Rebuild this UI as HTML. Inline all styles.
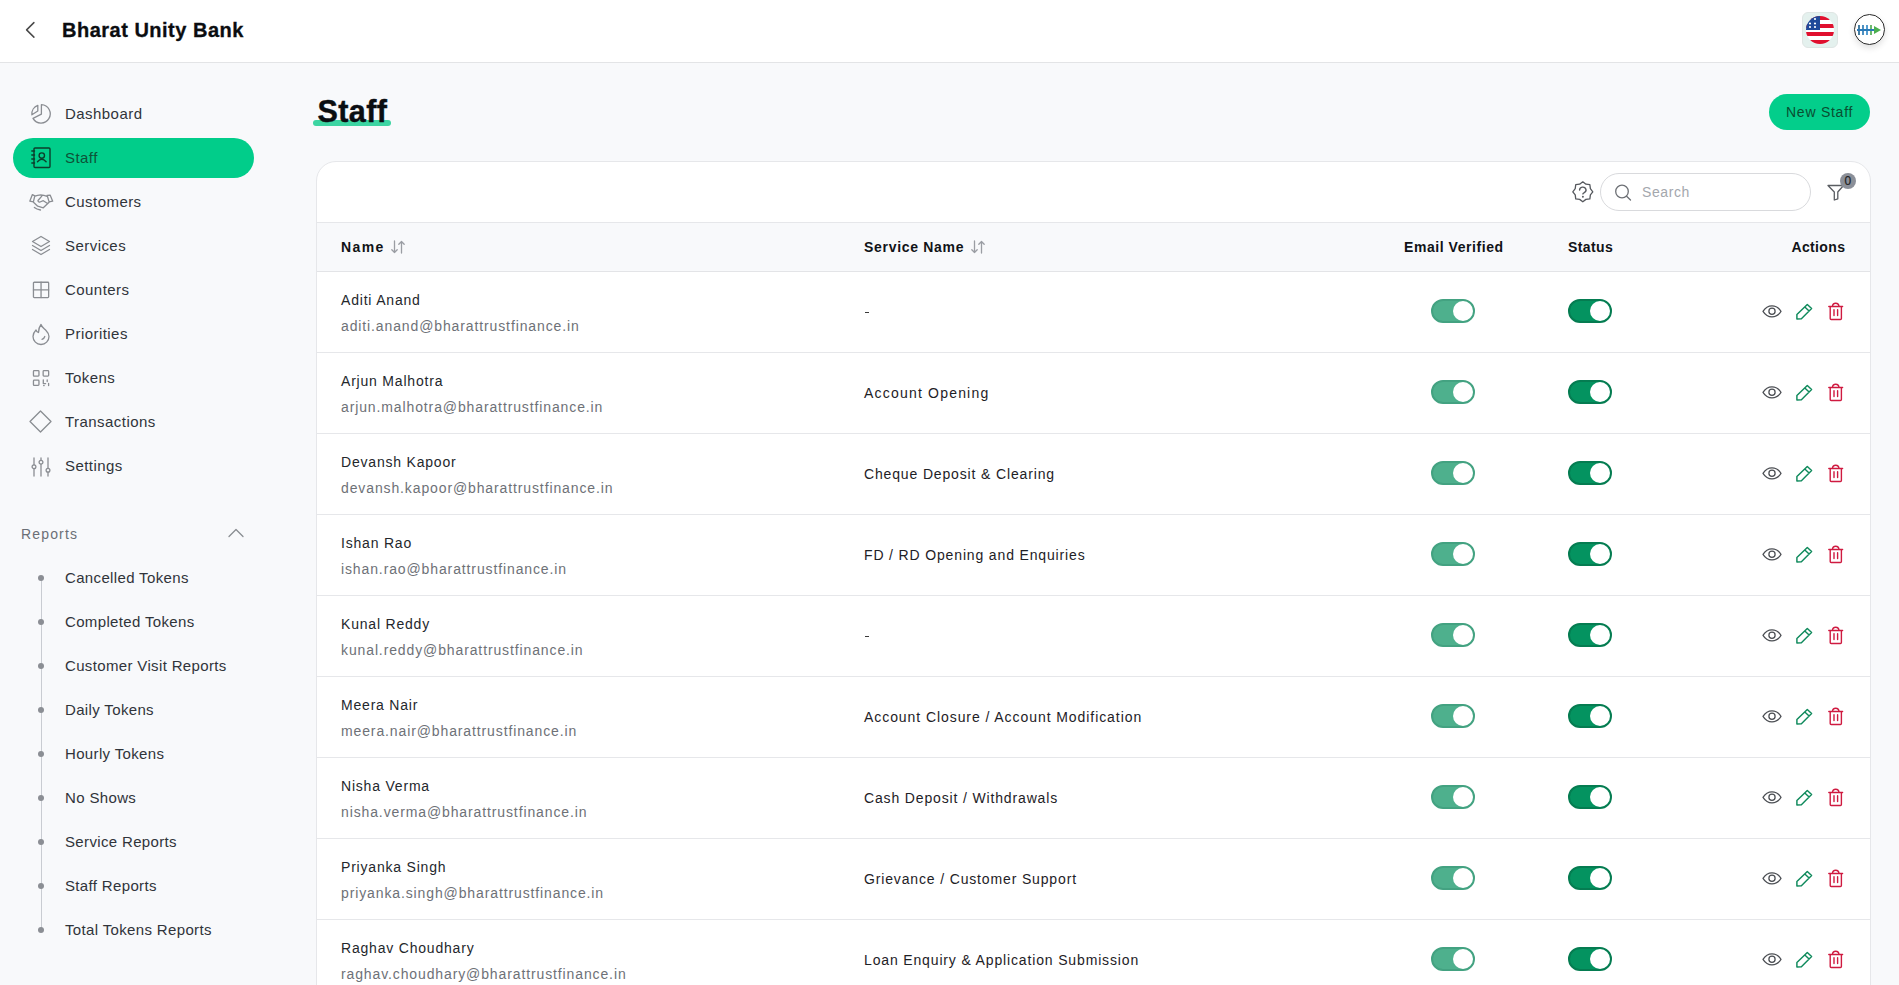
<!DOCTYPE html>
<html><head><meta charset="utf-8"><title>Staff</title>
<style>
html,body{margin:0;padding:0;width:1899px;height:985px;overflow:hidden;background:#f8f9fb;font-family:"Liberation Sans",sans-serif;}
.t{position:absolute;white-space:nowrap;}
svg{display:block}
</style></head><body>
<div style="position:absolute;left:0;top:0;width:1899px;height:62px;background:#fff;border-bottom:1px solid #e3e4e6"></div>
<svg style="position:absolute;left:22px;top:18px" width="16" height="24" viewBox="0 0 16 24"><path d="M11.9 4.6 L4.6 11.85 L11.9 19.1" fill="none" stroke="#4a4a4a" stroke-width="1.5" stroke-linecap="round" stroke-linejoin="round"/></svg>
<div class="t" style="left:62px;top:18.07px;font-size:20px;line-height:24px;font-weight:700;color:#0b0d10;letter-spacing:0.5px;-webkit-text-stroke:0.3px #0b0d10;">Bharat Unity Bank</div>
<div style="position:absolute;left:1802px;top:12px;width:34px;height:34px;border-radius:6px;background:#e4f1ee;border:1px solid #dfe6e4"></div>
<svg style="position:absolute;left:1806px;top:16px" width="28" height="28" viewBox="0 0 28 28"><defs><clipPath id="fc"><circle cx="14" cy="14" r="14"/></clipPath></defs><g clip-path="url(#fc)"><rect x="0" y="0" width="28" height="4" fill="#e0102e"/><rect x="0" y="4" width="28" height="4" fill="#ffffff"/><rect x="0" y="8" width="28" height="4" fill="#e0102e"/><rect x="0" y="12" width="28" height="4" fill="#ffffff"/><rect x="0" y="16" width="28" height="4" fill="#e0102e"/><rect x="0" y="20" width="28" height="4" fill="#ffffff"/><rect x="0" y="24" width="28" height="4" fill="#e0102e"/><rect x="0" y="0" width="14" height="14" fill="#1f4a9a"/><circle cx="4" cy="3" r="1.1" fill="#fff"/><circle cx="9" cy="3" r="1.1" fill="#fff"/><circle cx="4" cy="7.5" r="1.1" fill="#fff"/><circle cx="9" cy="7.5" r="1.1" fill="#fff"/><circle cx="4" cy="11" r="1.1" fill="#fff"/><circle cx="9" cy="11" r="1.1" fill="#fff"/></g></svg>
<div style="position:absolute;left:1854px;top:14px;width:29px;height:29px;border-radius:50%;background:#fff;border:1.5px solid #2a2a2a;box-shadow:0 3px 6px rgba(0,0,0,0.12)"></div>
<svg style="position:absolute;left:1856px;top:24px" width="28" height="12" viewBox="0 0 28 12"><rect x="2.2" y="1" width="1.6" height="10" fill="#1b5f8a"/><rect x="6.2" y="1" width="1.6" height="10" fill="#2476b0"/><rect x="10.2" y="1" width="1.6" height="10" fill="#2a86c6"/><rect x="14.2" y="1" width="1.6" height="10" fill="#4aa84a"/><rect x="1" y="5" width="18" height="2" fill="#2a7ab8"/><path d="M18 2 L25 6 L18 10 Z" fill="#4caf50"/></svg>
<div style="position:absolute;left:13px;top:138px;width:241px;height:40px;border-radius:20px;background:#01cd8a"></div>
<svg style="position:absolute;left:31px;top:104px;overflow:visible" width="20" height="20" viewBox="0 0 20 20"><path d="M10.4 0.7 A9.2 9.2 0 1 1 2 14.4 L10.4 10.2 Z" fill="none" stroke="#8a8d92" stroke-width="1.3" stroke-linecap="round" stroke-linejoin="round"/><path d="M6.8 1.3 L6.8 7 L0.9 10.8 A9.2 9.2 0 0 1 6.8 1.3 Z" fill="none" stroke="#8a8d92" stroke-width="1.3" stroke-linecap="round" stroke-linejoin="round"/></svg>
<div class="t" style="left:65px;top:104.80px;font-size:15px;line-height:18px;font-weight:400;color:#30343a;letter-spacing:0.45px;">Dashboard</div>
<svg style="position:absolute;left:28px;top:146px;overflow:visible" width="24" height="24" viewBox="0 0 24 24"><g fill="none" stroke="#0d3d2b" stroke-width="1.4" stroke-linecap="round" stroke-linejoin="round"><rect x="6" y="2" width="16" height="19.5" rx="1"/><circle cx="13.8" cy="9.6" r="2.7"/><path d="M9.5 15.8 Q13.8 10.8 18.1 15.8"/><path d="M3.8 5 H6.5 M3.8 9 H6.5 M3.8 13 H6.5 M3.8 17 H6.5"/></g></svg>
<div class="t" style="left:65px;top:148.80px;font-size:15px;line-height:18px;font-weight:400;color:#0e5238;letter-spacing:0.45px;">Staff</div>
<svg style="position:absolute;left:25px;top:190px;overflow:visible" width="32" height="25" viewBox="0 0 32 25"><path d="M7.4 4.6 L9.8 5.9 L8.4 11.9 L4.8 11.2 Z M22.1 5.3 L25.1 5.1 L27.7 11.2 L24.1 11.9 Z M9.9 6.1 Q12.5 5 15.7 4.8 Q19 5 22.1 6.3 M16.8 6.1 L13 10.5 Q13 12.4 15 12 L18.3 10.7 L22.6 13.5 M8.2 12 L12.7 16.2 L18.3 17.8 L24.1 12.2 M9.4 17.5 Q11.5 19.3 15.5 20" fill="none" stroke="#8a8d92" stroke-width="1.3" stroke-linecap="round" stroke-linejoin="round"/></svg>
<div class="t" style="left:65px;top:192.80px;font-size:15px;line-height:18px;font-weight:400;color:#30343a;letter-spacing:0.45px;">Customers</div>
<svg style="position:absolute;left:31px;top:235px;overflow:visible" width="20" height="21" viewBox="0 0 20 21"><path d="M10 1.5 L18.5 6.5 L10 11.5 L1.5 6.5 Z" fill="none" stroke="#8a8d92" stroke-width="1.3" stroke-linecap="round" stroke-linejoin="round"/><path d="M1.5 10.5 L10 15.5 L18.5 10.5" fill="none" stroke="#8a8d92" stroke-width="1.3" stroke-linecap="round" stroke-linejoin="round"/><path d="M1.5 14.5 L10 19.5 L18.5 14.5" fill="none" stroke="#8a8d92" stroke-width="1.3" stroke-linecap="round" stroke-linejoin="round"/></svg>
<div class="t" style="left:65px;top:236.80px;font-size:15px;line-height:18px;font-weight:400;color:#30343a;letter-spacing:0.45px;">Services</div>
<svg style="position:absolute;left:31px;top:280px;overflow:visible" width="20" height="20" viewBox="0 0 20 20"><rect x="2.45" y="2.25" width="15.2" height="15.3" rx="0.8" fill="none" stroke="#8a8d92" stroke-width="1.3" stroke-linecap="round" stroke-linejoin="round"/><path d="M10.05 2.25 V17.55 M2.45 9.9 H17.65" fill="none" stroke="#8a8d92" stroke-width="1.3" stroke-linecap="round" stroke-linejoin="round"/></svg>
<div class="t" style="left:65px;top:280.80px;font-size:15px;line-height:18px;font-weight:400;color:#30343a;letter-spacing:0.45px;">Counters</div>
<svg style="position:absolute;left:31px;top:323px;overflow:visible" width="20" height="22" viewBox="0 0 20 22"><path d="M10 1.5 C10.5 4 13 5.5 15 7.5 C17 9.5 18 11.5 18 13.5 A8 8 0 0 1 2 13.5 C2 10.5 3.5 8.5 5 7 C5.5 8.5 6.5 9.5 7.5 9.5 C7.5 6.5 8.5 3.5 10 1.5 Z" fill="none" stroke="#8a8d92" stroke-width="1.3" stroke-linecap="round" stroke-linejoin="round"/><path d="M13.8 13.5 Q13.2 15.6 11 16.3" fill="none" stroke="#8a8d92" stroke-width="1.3" stroke-linecap="round" stroke-linejoin="round"/></svg>
<div class="t" style="left:65px;top:324.80px;font-size:15px;line-height:18px;font-weight:400;color:#30343a;letter-spacing:0.45px;">Priorities</div>
<svg style="position:absolute;left:31px;top:368px;overflow:visible" width="20" height="20" viewBox="0 0 20 20"><rect x="2.45" y="2.65" width="5.5" height="5.5" rx="0.8" fill="none" stroke="#8a8d92" stroke-width="1.3" stroke-linecap="round" stroke-linejoin="round"/><rect x="12.15" y="2.65" width="5.5" height="5.5" rx="0.8" fill="none" stroke="#8a8d92" stroke-width="1.3" stroke-linecap="round" stroke-linejoin="round"/><rect x="2.45" y="12.1" width="5.5" height="5.3" rx="0.8" fill="none" stroke="#8a8d92" stroke-width="1.3" stroke-linecap="round" stroke-linejoin="round"/><path d="M12.3 11.8 V15.6 H14.6 M16.2 11.8 V13.6 M17.6 15.4 V17.6 M12.6 17.6 H13.2" fill="none" stroke="#8a8d92" stroke-width="1.3" stroke-linecap="round" stroke-linejoin="round"/></svg>
<div class="t" style="left:65px;top:368.80px;font-size:15px;line-height:18px;font-weight:400;color:#30343a;letter-spacing:0.45px;">Tokens</div>
<svg style="position:absolute;left:30px;top:411px;overflow:visible" width="21" height="21" viewBox="0 0 21 21"><path d="M10.5 0 L21 10.5 L10.5 21 L0 10.5 Z" transform="translate(0 0)" fill="none" stroke="#8a8d92" stroke-width="1.3" stroke-linecap="round" stroke-linejoin="round"/></svg>
<div class="t" style="left:65px;top:412.80px;font-size:15px;line-height:18px;font-weight:400;color:#30343a;letter-spacing:0.45px;">Transactions</div>
<svg style="position:absolute;left:31px;top:457px;overflow:visible" width="20" height="20" viewBox="0 0 20 20"><path d="M3 1 V8 M3 11.5 V19 M10 1 V3.5 M10 7 V19 M17 1 V11.5 M17 15 V19" fill="none" stroke="#8a8d92" stroke-width="1.3" stroke-linecap="round" stroke-linejoin="round"/><circle cx="3" cy="9.8" r="1.9" fill="none" stroke="#8a8d92" stroke-width="1.3" stroke-linecap="round" stroke-linejoin="round"/><circle cx="10" cy="5.3" r="1.9" fill="none" stroke="#8a8d92" stroke-width="1.3" stroke-linecap="round" stroke-linejoin="round"/><circle cx="17" cy="13.3" r="1.9" fill="none" stroke="#8a8d92" stroke-width="1.3" stroke-linecap="round" stroke-linejoin="round"/></svg>
<div class="t" style="left:65px;top:456.80px;font-size:15px;line-height:18px;font-weight:400;color:#30343a;letter-spacing:0.45px;">Settings</div>
<div class="t" style="left:21px;top:525.65px;font-size:14px;line-height:17px;font-weight:400;color:#6b6f76;letter-spacing:1.15px;">Reports</div>
<svg style="position:absolute;left:226px;top:526px" width="20" height="14" viewBox="0 0 20 14"><path d="M3 10.5 L10 3.5 L17 10.5" fill="none" stroke="#8a8d92" stroke-width="1.3" stroke-linecap="round" stroke-linejoin="round"/></svg>
<div style="position:absolute;left:40.5px;top:578px;width:1px;height:352px;background:#c9ccd2"></div>
<div style="position:absolute;left:38px;top:575.0px;width:6px;height:6px;border-radius:50%;background:#8b8e94"></div>
<div class="t" style="left:65px;top:568.80px;font-size:15px;line-height:18px;font-weight:400;color:#30343a;letter-spacing:0.35px;">Cancelled Tokens</div>
<div style="position:absolute;left:38px;top:619.0px;width:6px;height:6px;border-radius:50%;background:#8b8e94"></div>
<div class="t" style="left:65px;top:612.80px;font-size:15px;line-height:18px;font-weight:400;color:#30343a;letter-spacing:0.35px;">Completed Tokens</div>
<div style="position:absolute;left:38px;top:663.0px;width:6px;height:6px;border-radius:50%;background:#8b8e94"></div>
<div class="t" style="left:65px;top:656.80px;font-size:15px;line-height:18px;font-weight:400;color:#30343a;letter-spacing:0.35px;">Customer Visit Reports</div>
<div style="position:absolute;left:38px;top:707.0px;width:6px;height:6px;border-radius:50%;background:#8b8e94"></div>
<div class="t" style="left:65px;top:700.80px;font-size:15px;line-height:18px;font-weight:400;color:#30343a;letter-spacing:0.35px;">Daily Tokens</div>
<div style="position:absolute;left:38px;top:751.0px;width:6px;height:6px;border-radius:50%;background:#8b8e94"></div>
<div class="t" style="left:65px;top:744.80px;font-size:15px;line-height:18px;font-weight:400;color:#30343a;letter-spacing:0.35px;">Hourly Tokens</div>
<div style="position:absolute;left:38px;top:795.0px;width:6px;height:6px;border-radius:50%;background:#8b8e94"></div>
<div class="t" style="left:65px;top:788.80px;font-size:15px;line-height:18px;font-weight:400;color:#30343a;letter-spacing:0.35px;">No Shows</div>
<div style="position:absolute;left:38px;top:839.0px;width:6px;height:6px;border-radius:50%;background:#8b8e94"></div>
<div class="t" style="left:65px;top:832.80px;font-size:15px;line-height:18px;font-weight:400;color:#30343a;letter-spacing:0.35px;">Service Reports</div>
<div style="position:absolute;left:38px;top:883.0px;width:6px;height:6px;border-radius:50%;background:#8b8e94"></div>
<div class="t" style="left:65px;top:876.80px;font-size:15px;line-height:18px;font-weight:400;color:#30343a;letter-spacing:0.35px;">Staff Reports</div>
<div style="position:absolute;left:38px;top:927.0px;width:6px;height:6px;border-radius:50%;background:#8b8e94"></div>
<div class="t" style="left:65px;top:920.80px;font-size:15px;line-height:18px;font-weight:400;color:#30343a;letter-spacing:0.35px;">Total Tokens Reports</div>
<div style="position:absolute;left:313px;top:120px;width:78px;height:6px;border-radius:3px;background:#3dd5a2"></div>
<div class="t" style="left:317.5px;top:93.13px;font-size:30.5px;line-height:37px;font-weight:700;color:#0b0e12;letter-spacing:0.4px;-webkit-text-stroke:0.45px #0b0e12;">Staff</div>
<div style="position:absolute;left:1769px;top:94px;width:101px;height:36px;border-radius:18px;background:#03ce8b"></div>
<div class="t" style="left:1786px;top:103.65px;font-size:14px;line-height:17px;font-weight:400;color:#0a4d31;letter-spacing:0.75px;">New Staff</div>
<div style="position:absolute;left:316px;top:161px;width:1553px;height:900px;background:#fff;border:1px solid #e6e7ea;border-radius:20px 20px 0 0"></div>
<div style="position:absolute;left:317px;top:222px;width:1553px;height:50px;background:#f8f9fb;border-top:1px solid #e6e7ea;border-bottom:1px solid #e3e4e7;box-sizing:border-box"></div>
<svg style="position:absolute;left:1568px;top:177px" width="30" height="30" viewBox="0 0 30 30"><path d="M14.80 4.80 L17.94 7.22 L21.87 7.73 L22.38 11.66 L24.80 14.80 L22.38 17.94 L21.87 21.87 L17.94 22.38 L14.80 24.80 L11.66 22.38 L7.73 21.87 L7.22 17.94 L4.80 14.80 L7.22 11.66 L7.73 7.73 L11.66 7.22 Z" fill="none" stroke="#55585d" stroke-width="1.3" stroke-linejoin="round"/><path d="M11.6 13.1 A3.2 2.9 0 1 1 16.3 15.6 C15.4 16 14.9 16.4 14.9 16.9" fill="none" stroke="#55585d" stroke-width="1.4" stroke-linecap="round"/><circle cx="14.9" cy="19.8" r="0.95" fill="#55585d"/></svg>
<div style="position:absolute;left:1600px;top:173px;width:209px;height:36px;border-radius:19px;background:#fff;border:1px solid #d9dadd"></div>
<svg style="position:absolute;left:1613px;top:183px" width="20" height="19" viewBox="0 0 20 19"><circle cx="9" cy="8.5" r="6.3" fill="none" stroke="#6d7075" stroke-width="1.3"/><path d="M13.6 13.2 L17.5 17" stroke="#6d7075" stroke-width="1.3" stroke-linecap="round"/></svg>
<div class="t" style="left:1642px;top:183.85px;font-size:14px;line-height:17px;font-weight:400;color:#a4a7ad;letter-spacing:0.6px;">Search</div>
<svg style="position:absolute;left:1826px;top:183px" width="20" height="19" viewBox="0 0 20 19"><path d="M2 2.5 H17.5 L11.8 9 V15.8 L8.3 17 V9 Z" fill="none" stroke="#5a5d62" stroke-width="1.3" stroke-linejoin="round"/></svg>
<div style="position:absolute;left:1840px;top:173px;width:16px;height:16px;border-radius:50%;background:#8b8f98"></div>
<div class="t" style="left:1844.6px;top:174.34px;font-size:12px;line-height:14px;font-weight:400;color:#1d1f23;letter-spacing:0px;-webkit-text-stroke:0.2px #1d1f23;">0</div>
<div class="t" style="left:341px;top:238.75px;font-size:14px;line-height:17px;font-weight:700;color:#111317;letter-spacing:1.4px;">Name</div>
<div class="t" style="left:864px;top:238.75px;font-size:14px;line-height:17px;font-weight:700;color:#111317;letter-spacing:0.7px;">Service Name</div>
<div class="t" style="left:1404px;top:238.75px;font-size:14px;line-height:17px;font-weight:700;color:#111317;letter-spacing:0.56px;">Email Verified</div>
<div class="t" style="left:1568px;top:238.75px;font-size:14px;line-height:17px;font-weight:700;color:#111317;letter-spacing:0.4px;">Status</div>
<div class="t" style="left:1791.5px;top:238.75px;font-size:14px;line-height:17px;font-weight:700;color:#111317;letter-spacing:0.35px;">Actions</div>
<svg style="position:absolute;left:390px;top:239px" width="16" height="16" viewBox="0 0 16 16"><path d="M4.5 2 V13.5 M1.8 10.8 L4.5 13.5 L7.2 10.8" fill="none" stroke="#9a9da3" stroke-width="1.3" stroke-linecap="round" stroke-linejoin="round"/><path d="M11.5 14 V2.5 M8.8 5.2 L11.5 2.5 L14.2 5.2" fill="none" stroke="#9a9da3" stroke-width="1.3" stroke-linecap="round" stroke-linejoin="round"/></svg>
<svg style="position:absolute;left:970px;top:239px" width="16" height="16" viewBox="0 0 16 16"><path d="M4.5 2 V13.5 M1.8 10.8 L4.5 13.5 L7.2 10.8" fill="none" stroke="#9a9da3" stroke-width="1.3" stroke-linecap="round" stroke-linejoin="round"/><path d="M11.5 14 V2.5 M8.8 5.2 L11.5 2.5 L14.2 5.2" fill="none" stroke="#9a9da3" stroke-width="1.3" stroke-linecap="round" stroke-linejoin="round"/></svg>
<div class="t" style="left:341px;top:292.05px;font-size:14px;line-height:17px;font-weight:400;color:#24272c;letter-spacing:0.8px;">Aditi Anand</div>
<div class="t" style="left:341px;top:318.25px;font-size:14px;line-height:17px;font-weight:400;color:#6e7177;letter-spacing:0.88px;">aditi.anand@bharattrustfinance.in</div>
<div style="position:absolute;left:865px;top:311.6px;width:4px;height:1.7px;background:#3a3a3a"></div>
<div style="position:absolute;left:1431px;top:299px;width:44px;height:24px;border-radius:12px;background:#4eb08d;box-sizing:border-box;border:2px solid #43a281"></div>
<div style="position:absolute;left:1453px;top:301px;width:20px;height:20px;border-radius:50%;background:#fff"></div>
<div style="position:absolute;left:1568px;top:299px;width:44px;height:24px;border-radius:12px;background:#049360;box-sizing:border-box;border:2px solid #057c51"></div>
<div style="position:absolute;left:1590px;top:301px;width:20px;height:20px;border-radius:50%;background:#fff"></div>
<svg style="position:absolute;left:1761px;top:305px" width="22" height="14" viewBox="0 0 22 14"><path d="M2 6.3 C4.5 2.3 7.5 0.8 11 0.8 C14.5 0.8 17.5 2.3 20 6.3 C17.5 10.3 14.5 11.8 11 11.8 C7.5 11.8 4.5 10.3 2 6.3 Z" fill="none" stroke="#4b4e53" stroke-width="1.25" stroke-linejoin="round"/><circle cx="11" cy="6.3" r="3.1" fill="none" stroke="#4b4e53" stroke-width="1.25"/></svg>
<svg style="position:absolute;left:1795px;top:302px" width="18" height="20" viewBox="0 0 18 20"><path d="M1.9 12.6 L12.3 2.4 L16.6 6.6 L6.4 16.8 L1.9 17 Z M9.8 5 L14.1 9.1" fill="none" stroke="#0f8a5c" stroke-width="1.45" stroke-linejoin="round" stroke-linecap="round"/></svg>
<svg style="position:absolute;left:1827px;top:301.2px" width="18" height="20" viewBox="0 0 18 20"><path d="M1.8 5.5 H15.6 M5.4 5.5 Q5.6 2.2 8.7 2.2 Q11.8 2.2 12 5.5 M3.2 5.5 V17.5 Q3.2 18.5 4.2 18.5 H13.4 Q14.4 18.5 14.4 17.5 V5.5 M7 8.8 V14.6 M10.6 8.8 V14.6" fill="none" stroke="#cf1a40" stroke-width="1.4" stroke-linecap="round" stroke-linejoin="round"/></svg>
<div style="position:absolute;left:317px;top:352px;width:1553px;height:1px;background:#e6e7ea"></div>
<div class="t" style="left:341px;top:373.05px;font-size:14px;line-height:17px;font-weight:400;color:#24272c;letter-spacing:0.8px;">Arjun Malhotra</div>
<div class="t" style="left:341px;top:399.25px;font-size:14px;line-height:17px;font-weight:400;color:#6e7177;letter-spacing:0.88px;">arjun.malhotra@bharattrustfinance.in</div>
<div class="t" style="left:864px;top:385.35px;font-size:14px;line-height:17px;font-weight:400;color:#1e2126;letter-spacing:1.2px;">Account Opening</div>
<div style="position:absolute;left:1431px;top:380px;width:44px;height:24px;border-radius:12px;background:#4eb08d;box-sizing:border-box;border:2px solid #43a281"></div>
<div style="position:absolute;left:1453px;top:382px;width:20px;height:20px;border-radius:50%;background:#fff"></div>
<div style="position:absolute;left:1568px;top:380px;width:44px;height:24px;border-radius:12px;background:#049360;box-sizing:border-box;border:2px solid #057c51"></div>
<div style="position:absolute;left:1590px;top:382px;width:20px;height:20px;border-radius:50%;background:#fff"></div>
<svg style="position:absolute;left:1761px;top:386px" width="22" height="14" viewBox="0 0 22 14"><path d="M2 6.3 C4.5 2.3 7.5 0.8 11 0.8 C14.5 0.8 17.5 2.3 20 6.3 C17.5 10.3 14.5 11.8 11 11.8 C7.5 11.8 4.5 10.3 2 6.3 Z" fill="none" stroke="#4b4e53" stroke-width="1.25" stroke-linejoin="round"/><circle cx="11" cy="6.3" r="3.1" fill="none" stroke="#4b4e53" stroke-width="1.25"/></svg>
<svg style="position:absolute;left:1795px;top:383px" width="18" height="20" viewBox="0 0 18 20"><path d="M1.9 12.6 L12.3 2.4 L16.6 6.6 L6.4 16.8 L1.9 17 Z M9.8 5 L14.1 9.1" fill="none" stroke="#0f8a5c" stroke-width="1.45" stroke-linejoin="round" stroke-linecap="round"/></svg>
<svg style="position:absolute;left:1827px;top:382.2px" width="18" height="20" viewBox="0 0 18 20"><path d="M1.8 5.5 H15.6 M5.4 5.5 Q5.6 2.2 8.7 2.2 Q11.8 2.2 12 5.5 M3.2 5.5 V17.5 Q3.2 18.5 4.2 18.5 H13.4 Q14.4 18.5 14.4 17.5 V5.5 M7 8.8 V14.6 M10.6 8.8 V14.6" fill="none" stroke="#cf1a40" stroke-width="1.4" stroke-linecap="round" stroke-linejoin="round"/></svg>
<div style="position:absolute;left:317px;top:433px;width:1553px;height:1px;background:#e6e7ea"></div>
<div class="t" style="left:341px;top:454.05px;font-size:14px;line-height:17px;font-weight:400;color:#24272c;letter-spacing:0.8px;">Devansh Kapoor</div>
<div class="t" style="left:341px;top:480.25px;font-size:14px;line-height:17px;font-weight:400;color:#6e7177;letter-spacing:0.88px;">devansh.kapoor@bharattrustfinance.in</div>
<div class="t" style="left:864px;top:466.35px;font-size:14px;line-height:17px;font-weight:400;color:#1e2126;letter-spacing:0.85px;">Cheque Deposit &amp; Clearing</div>
<div style="position:absolute;left:1431px;top:461px;width:44px;height:24px;border-radius:12px;background:#4eb08d;box-sizing:border-box;border:2px solid #43a281"></div>
<div style="position:absolute;left:1453px;top:463px;width:20px;height:20px;border-radius:50%;background:#fff"></div>
<div style="position:absolute;left:1568px;top:461px;width:44px;height:24px;border-radius:12px;background:#049360;box-sizing:border-box;border:2px solid #057c51"></div>
<div style="position:absolute;left:1590px;top:463px;width:20px;height:20px;border-radius:50%;background:#fff"></div>
<svg style="position:absolute;left:1761px;top:467px" width="22" height="14" viewBox="0 0 22 14"><path d="M2 6.3 C4.5 2.3 7.5 0.8 11 0.8 C14.5 0.8 17.5 2.3 20 6.3 C17.5 10.3 14.5 11.8 11 11.8 C7.5 11.8 4.5 10.3 2 6.3 Z" fill="none" stroke="#4b4e53" stroke-width="1.25" stroke-linejoin="round"/><circle cx="11" cy="6.3" r="3.1" fill="none" stroke="#4b4e53" stroke-width="1.25"/></svg>
<svg style="position:absolute;left:1795px;top:464px" width="18" height="20" viewBox="0 0 18 20"><path d="M1.9 12.6 L12.3 2.4 L16.6 6.6 L6.4 16.8 L1.9 17 Z M9.8 5 L14.1 9.1" fill="none" stroke="#0f8a5c" stroke-width="1.45" stroke-linejoin="round" stroke-linecap="round"/></svg>
<svg style="position:absolute;left:1827px;top:463.2px" width="18" height="20" viewBox="0 0 18 20"><path d="M1.8 5.5 H15.6 M5.4 5.5 Q5.6 2.2 8.7 2.2 Q11.8 2.2 12 5.5 M3.2 5.5 V17.5 Q3.2 18.5 4.2 18.5 H13.4 Q14.4 18.5 14.4 17.5 V5.5 M7 8.8 V14.6 M10.6 8.8 V14.6" fill="none" stroke="#cf1a40" stroke-width="1.4" stroke-linecap="round" stroke-linejoin="round"/></svg>
<div style="position:absolute;left:317px;top:514px;width:1553px;height:1px;background:#e6e7ea"></div>
<div class="t" style="left:341px;top:535.05px;font-size:14px;line-height:17px;font-weight:400;color:#24272c;letter-spacing:0.8px;">Ishan Rao</div>
<div class="t" style="left:341px;top:561.25px;font-size:14px;line-height:17px;font-weight:400;color:#6e7177;letter-spacing:0.88px;">ishan.rao@bharattrustfinance.in</div>
<div class="t" style="left:864px;top:547.35px;font-size:14px;line-height:17px;font-weight:400;color:#1e2126;letter-spacing:0.85px;">FD / RD Opening and Enquiries</div>
<div style="position:absolute;left:1431px;top:542px;width:44px;height:24px;border-radius:12px;background:#4eb08d;box-sizing:border-box;border:2px solid #43a281"></div>
<div style="position:absolute;left:1453px;top:544px;width:20px;height:20px;border-radius:50%;background:#fff"></div>
<div style="position:absolute;left:1568px;top:542px;width:44px;height:24px;border-radius:12px;background:#049360;box-sizing:border-box;border:2px solid #057c51"></div>
<div style="position:absolute;left:1590px;top:544px;width:20px;height:20px;border-radius:50%;background:#fff"></div>
<svg style="position:absolute;left:1761px;top:548px" width="22" height="14" viewBox="0 0 22 14"><path d="M2 6.3 C4.5 2.3 7.5 0.8 11 0.8 C14.5 0.8 17.5 2.3 20 6.3 C17.5 10.3 14.5 11.8 11 11.8 C7.5 11.8 4.5 10.3 2 6.3 Z" fill="none" stroke="#4b4e53" stroke-width="1.25" stroke-linejoin="round"/><circle cx="11" cy="6.3" r="3.1" fill="none" stroke="#4b4e53" stroke-width="1.25"/></svg>
<svg style="position:absolute;left:1795px;top:545px" width="18" height="20" viewBox="0 0 18 20"><path d="M1.9 12.6 L12.3 2.4 L16.6 6.6 L6.4 16.8 L1.9 17 Z M9.8 5 L14.1 9.1" fill="none" stroke="#0f8a5c" stroke-width="1.45" stroke-linejoin="round" stroke-linecap="round"/></svg>
<svg style="position:absolute;left:1827px;top:544.2px" width="18" height="20" viewBox="0 0 18 20"><path d="M1.8 5.5 H15.6 M5.4 5.5 Q5.6 2.2 8.7 2.2 Q11.8 2.2 12 5.5 M3.2 5.5 V17.5 Q3.2 18.5 4.2 18.5 H13.4 Q14.4 18.5 14.4 17.5 V5.5 M7 8.8 V14.6 M10.6 8.8 V14.6" fill="none" stroke="#cf1a40" stroke-width="1.4" stroke-linecap="round" stroke-linejoin="round"/></svg>
<div style="position:absolute;left:317px;top:595px;width:1553px;height:1px;background:#e6e7ea"></div>
<div class="t" style="left:341px;top:616.05px;font-size:14px;line-height:17px;font-weight:400;color:#24272c;letter-spacing:0.8px;">Kunal Reddy</div>
<div class="t" style="left:341px;top:642.25px;font-size:14px;line-height:17px;font-weight:400;color:#6e7177;letter-spacing:0.88px;">kunal.reddy@bharattrustfinance.in</div>
<div style="position:absolute;left:865px;top:635.6px;width:4px;height:1.7px;background:#3a3a3a"></div>
<div style="position:absolute;left:1431px;top:623px;width:44px;height:24px;border-radius:12px;background:#4eb08d;box-sizing:border-box;border:2px solid #43a281"></div>
<div style="position:absolute;left:1453px;top:625px;width:20px;height:20px;border-radius:50%;background:#fff"></div>
<div style="position:absolute;left:1568px;top:623px;width:44px;height:24px;border-radius:12px;background:#049360;box-sizing:border-box;border:2px solid #057c51"></div>
<div style="position:absolute;left:1590px;top:625px;width:20px;height:20px;border-radius:50%;background:#fff"></div>
<svg style="position:absolute;left:1761px;top:629px" width="22" height="14" viewBox="0 0 22 14"><path d="M2 6.3 C4.5 2.3 7.5 0.8 11 0.8 C14.5 0.8 17.5 2.3 20 6.3 C17.5 10.3 14.5 11.8 11 11.8 C7.5 11.8 4.5 10.3 2 6.3 Z" fill="none" stroke="#4b4e53" stroke-width="1.25" stroke-linejoin="round"/><circle cx="11" cy="6.3" r="3.1" fill="none" stroke="#4b4e53" stroke-width="1.25"/></svg>
<svg style="position:absolute;left:1795px;top:626px" width="18" height="20" viewBox="0 0 18 20"><path d="M1.9 12.6 L12.3 2.4 L16.6 6.6 L6.4 16.8 L1.9 17 Z M9.8 5 L14.1 9.1" fill="none" stroke="#0f8a5c" stroke-width="1.45" stroke-linejoin="round" stroke-linecap="round"/></svg>
<svg style="position:absolute;left:1827px;top:625.2px" width="18" height="20" viewBox="0 0 18 20"><path d="M1.8 5.5 H15.6 M5.4 5.5 Q5.6 2.2 8.7 2.2 Q11.8 2.2 12 5.5 M3.2 5.5 V17.5 Q3.2 18.5 4.2 18.5 H13.4 Q14.4 18.5 14.4 17.5 V5.5 M7 8.8 V14.6 M10.6 8.8 V14.6" fill="none" stroke="#cf1a40" stroke-width="1.4" stroke-linecap="round" stroke-linejoin="round"/></svg>
<div style="position:absolute;left:317px;top:676px;width:1553px;height:1px;background:#e6e7ea"></div>
<div class="t" style="left:341px;top:697.05px;font-size:14px;line-height:17px;font-weight:400;color:#24272c;letter-spacing:0.8px;">Meera Nair</div>
<div class="t" style="left:341px;top:723.25px;font-size:14px;line-height:17px;font-weight:400;color:#6e7177;letter-spacing:0.88px;">meera.nair@bharattrustfinance.in</div>
<div class="t" style="left:864px;top:709.35px;font-size:14px;line-height:17px;font-weight:400;color:#1e2126;letter-spacing:0.93px;">Account Closure / Account Modification</div>
<div style="position:absolute;left:1431px;top:704px;width:44px;height:24px;border-radius:12px;background:#4eb08d;box-sizing:border-box;border:2px solid #43a281"></div>
<div style="position:absolute;left:1453px;top:706px;width:20px;height:20px;border-radius:50%;background:#fff"></div>
<div style="position:absolute;left:1568px;top:704px;width:44px;height:24px;border-radius:12px;background:#049360;box-sizing:border-box;border:2px solid #057c51"></div>
<div style="position:absolute;left:1590px;top:706px;width:20px;height:20px;border-radius:50%;background:#fff"></div>
<svg style="position:absolute;left:1761px;top:710px" width="22" height="14" viewBox="0 0 22 14"><path d="M2 6.3 C4.5 2.3 7.5 0.8 11 0.8 C14.5 0.8 17.5 2.3 20 6.3 C17.5 10.3 14.5 11.8 11 11.8 C7.5 11.8 4.5 10.3 2 6.3 Z" fill="none" stroke="#4b4e53" stroke-width="1.25" stroke-linejoin="round"/><circle cx="11" cy="6.3" r="3.1" fill="none" stroke="#4b4e53" stroke-width="1.25"/></svg>
<svg style="position:absolute;left:1795px;top:707px" width="18" height="20" viewBox="0 0 18 20"><path d="M1.9 12.6 L12.3 2.4 L16.6 6.6 L6.4 16.8 L1.9 17 Z M9.8 5 L14.1 9.1" fill="none" stroke="#0f8a5c" stroke-width="1.45" stroke-linejoin="round" stroke-linecap="round"/></svg>
<svg style="position:absolute;left:1827px;top:706.2px" width="18" height="20" viewBox="0 0 18 20"><path d="M1.8 5.5 H15.6 M5.4 5.5 Q5.6 2.2 8.7 2.2 Q11.8 2.2 12 5.5 M3.2 5.5 V17.5 Q3.2 18.5 4.2 18.5 H13.4 Q14.4 18.5 14.4 17.5 V5.5 M7 8.8 V14.6 M10.6 8.8 V14.6" fill="none" stroke="#cf1a40" stroke-width="1.4" stroke-linecap="round" stroke-linejoin="round"/></svg>
<div style="position:absolute;left:317px;top:757px;width:1553px;height:1px;background:#e6e7ea"></div>
<div class="t" style="left:341px;top:778.05px;font-size:14px;line-height:17px;font-weight:400;color:#24272c;letter-spacing:0.8px;">Nisha Verma</div>
<div class="t" style="left:341px;top:804.25px;font-size:14px;line-height:17px;font-weight:400;color:#6e7177;letter-spacing:0.88px;">nisha.verma@bharattrustfinance.in</div>
<div class="t" style="left:864px;top:790.35px;font-size:14px;line-height:17px;font-weight:400;color:#1e2126;letter-spacing:0.85px;">Cash Deposit / Withdrawals</div>
<div style="position:absolute;left:1431px;top:785px;width:44px;height:24px;border-radius:12px;background:#4eb08d;box-sizing:border-box;border:2px solid #43a281"></div>
<div style="position:absolute;left:1453px;top:787px;width:20px;height:20px;border-radius:50%;background:#fff"></div>
<div style="position:absolute;left:1568px;top:785px;width:44px;height:24px;border-radius:12px;background:#049360;box-sizing:border-box;border:2px solid #057c51"></div>
<div style="position:absolute;left:1590px;top:787px;width:20px;height:20px;border-radius:50%;background:#fff"></div>
<svg style="position:absolute;left:1761px;top:791px" width="22" height="14" viewBox="0 0 22 14"><path d="M2 6.3 C4.5 2.3 7.5 0.8 11 0.8 C14.5 0.8 17.5 2.3 20 6.3 C17.5 10.3 14.5 11.8 11 11.8 C7.5 11.8 4.5 10.3 2 6.3 Z" fill="none" stroke="#4b4e53" stroke-width="1.25" stroke-linejoin="round"/><circle cx="11" cy="6.3" r="3.1" fill="none" stroke="#4b4e53" stroke-width="1.25"/></svg>
<svg style="position:absolute;left:1795px;top:788px" width="18" height="20" viewBox="0 0 18 20"><path d="M1.9 12.6 L12.3 2.4 L16.6 6.6 L6.4 16.8 L1.9 17 Z M9.8 5 L14.1 9.1" fill="none" stroke="#0f8a5c" stroke-width="1.45" stroke-linejoin="round" stroke-linecap="round"/></svg>
<svg style="position:absolute;left:1827px;top:787.2px" width="18" height="20" viewBox="0 0 18 20"><path d="M1.8 5.5 H15.6 M5.4 5.5 Q5.6 2.2 8.7 2.2 Q11.8 2.2 12 5.5 M3.2 5.5 V17.5 Q3.2 18.5 4.2 18.5 H13.4 Q14.4 18.5 14.4 17.5 V5.5 M7 8.8 V14.6 M10.6 8.8 V14.6" fill="none" stroke="#cf1a40" stroke-width="1.4" stroke-linecap="round" stroke-linejoin="round"/></svg>
<div style="position:absolute;left:317px;top:838px;width:1553px;height:1px;background:#e6e7ea"></div>
<div class="t" style="left:341px;top:859.05px;font-size:14px;line-height:17px;font-weight:400;color:#24272c;letter-spacing:0.8px;">Priyanka Singh</div>
<div class="t" style="left:341px;top:885.25px;font-size:14px;line-height:17px;font-weight:400;color:#6e7177;letter-spacing:0.88px;">priyanka.singh@bharattrustfinance.in</div>
<div class="t" style="left:864px;top:871.35px;font-size:14px;line-height:17px;font-weight:400;color:#1e2126;letter-spacing:0.85px;">Grievance / Customer Support</div>
<div style="position:absolute;left:1431px;top:866px;width:44px;height:24px;border-radius:12px;background:#4eb08d;box-sizing:border-box;border:2px solid #43a281"></div>
<div style="position:absolute;left:1453px;top:868px;width:20px;height:20px;border-radius:50%;background:#fff"></div>
<div style="position:absolute;left:1568px;top:866px;width:44px;height:24px;border-radius:12px;background:#049360;box-sizing:border-box;border:2px solid #057c51"></div>
<div style="position:absolute;left:1590px;top:868px;width:20px;height:20px;border-radius:50%;background:#fff"></div>
<svg style="position:absolute;left:1761px;top:872px" width="22" height="14" viewBox="0 0 22 14"><path d="M2 6.3 C4.5 2.3 7.5 0.8 11 0.8 C14.5 0.8 17.5 2.3 20 6.3 C17.5 10.3 14.5 11.8 11 11.8 C7.5 11.8 4.5 10.3 2 6.3 Z" fill="none" stroke="#4b4e53" stroke-width="1.25" stroke-linejoin="round"/><circle cx="11" cy="6.3" r="3.1" fill="none" stroke="#4b4e53" stroke-width="1.25"/></svg>
<svg style="position:absolute;left:1795px;top:869px" width="18" height="20" viewBox="0 0 18 20"><path d="M1.9 12.6 L12.3 2.4 L16.6 6.6 L6.4 16.8 L1.9 17 Z M9.8 5 L14.1 9.1" fill="none" stroke="#0f8a5c" stroke-width="1.45" stroke-linejoin="round" stroke-linecap="round"/></svg>
<svg style="position:absolute;left:1827px;top:868.2px" width="18" height="20" viewBox="0 0 18 20"><path d="M1.8 5.5 H15.6 M5.4 5.5 Q5.6 2.2 8.7 2.2 Q11.8 2.2 12 5.5 M3.2 5.5 V17.5 Q3.2 18.5 4.2 18.5 H13.4 Q14.4 18.5 14.4 17.5 V5.5 M7 8.8 V14.6 M10.6 8.8 V14.6" fill="none" stroke="#cf1a40" stroke-width="1.4" stroke-linecap="round" stroke-linejoin="round"/></svg>
<div style="position:absolute;left:317px;top:919px;width:1553px;height:1px;background:#e6e7ea"></div>
<div class="t" style="left:341px;top:940.05px;font-size:14px;line-height:17px;font-weight:400;color:#24272c;letter-spacing:0.8px;">Raghav Choudhary</div>
<div class="t" style="left:341px;top:966.25px;font-size:14px;line-height:17px;font-weight:400;color:#6e7177;letter-spacing:0.88px;">raghav.choudhary@bharattrustfinance.in</div>
<div class="t" style="left:864px;top:952.35px;font-size:14px;line-height:17px;font-weight:400;color:#1e2126;letter-spacing:0.85px;">Loan Enquiry &amp; Application Submission</div>
<div style="position:absolute;left:1431px;top:947px;width:44px;height:24px;border-radius:12px;background:#4eb08d;box-sizing:border-box;border:2px solid #43a281"></div>
<div style="position:absolute;left:1453px;top:949px;width:20px;height:20px;border-radius:50%;background:#fff"></div>
<div style="position:absolute;left:1568px;top:947px;width:44px;height:24px;border-radius:12px;background:#049360;box-sizing:border-box;border:2px solid #057c51"></div>
<div style="position:absolute;left:1590px;top:949px;width:20px;height:20px;border-radius:50%;background:#fff"></div>
<svg style="position:absolute;left:1761px;top:953px" width="22" height="14" viewBox="0 0 22 14"><path d="M2 6.3 C4.5 2.3 7.5 0.8 11 0.8 C14.5 0.8 17.5 2.3 20 6.3 C17.5 10.3 14.5 11.8 11 11.8 C7.5 11.8 4.5 10.3 2 6.3 Z" fill="none" stroke="#4b4e53" stroke-width="1.25" stroke-linejoin="round"/><circle cx="11" cy="6.3" r="3.1" fill="none" stroke="#4b4e53" stroke-width="1.25"/></svg>
<svg style="position:absolute;left:1795px;top:950px" width="18" height="20" viewBox="0 0 18 20"><path d="M1.9 12.6 L12.3 2.4 L16.6 6.6 L6.4 16.8 L1.9 17 Z M9.8 5 L14.1 9.1" fill="none" stroke="#0f8a5c" stroke-width="1.45" stroke-linejoin="round" stroke-linecap="round"/></svg>
<svg style="position:absolute;left:1827px;top:949.2px" width="18" height="20" viewBox="0 0 18 20"><path d="M1.8 5.5 H15.6 M5.4 5.5 Q5.6 2.2 8.7 2.2 Q11.8 2.2 12 5.5 M3.2 5.5 V17.5 Q3.2 18.5 4.2 18.5 H13.4 Q14.4 18.5 14.4 17.5 V5.5 M7 8.8 V14.6 M10.6 8.8 V14.6" fill="none" stroke="#cf1a40" stroke-width="1.4" stroke-linecap="round" stroke-linejoin="round"/></svg>
</body></html>
